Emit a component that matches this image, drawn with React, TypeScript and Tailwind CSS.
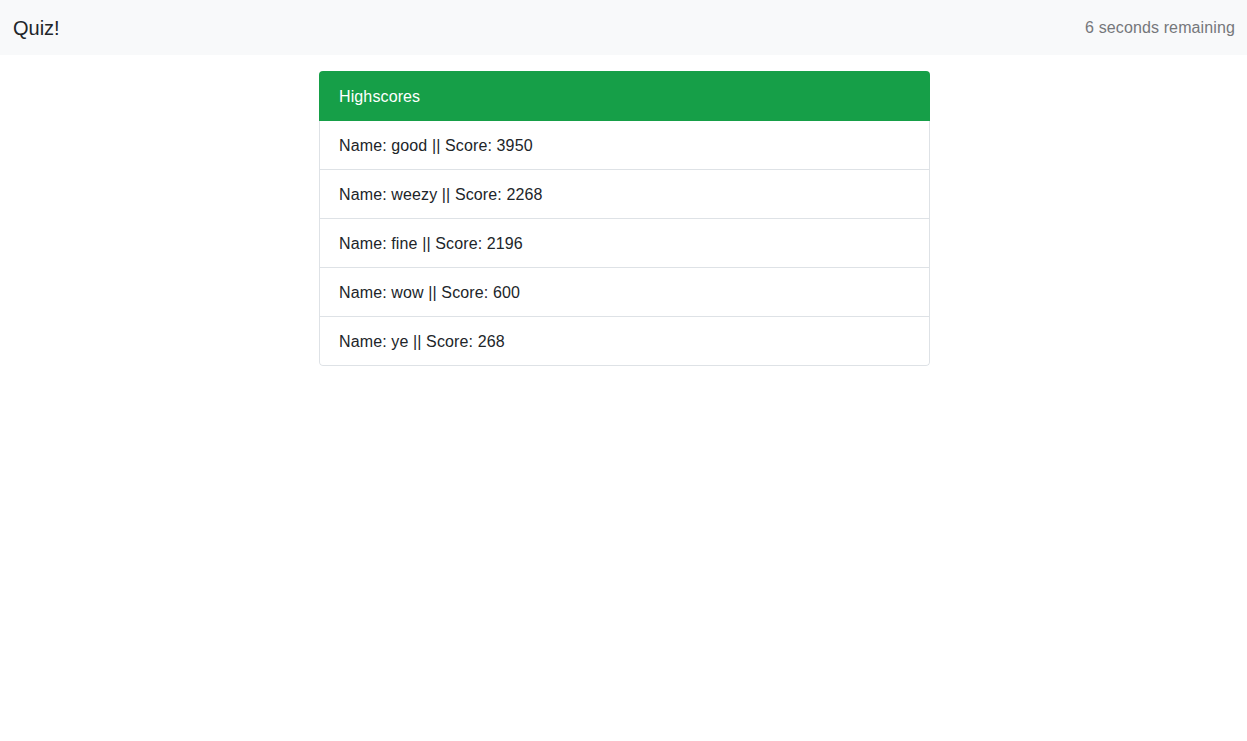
import React from "react";

const scores = [
  { name: "good", score: 3950 },
  { name: "weezy", score: 2268 },
  { name: "fine", score: 2196 },
  { name: "wow", score: 600 },
  { name: "ye", score: 268 },
];

export default function App() {
  return (
    <div className="min-h-screen bg-white text-[#212529] tracking-[0.12px]" style={{ fontFamily: '"Liberation Sans", Arial, sans-serif' }}>
      <nav className="flex h-[55px] items-center justify-between bg-[#f8f9fa] pl-[13px] pr-[12px]">
        <span className="text-[20px] text-[#212529] tracking-normal">Quiz!</span>
        <span className="text-[16px] text-[#75777a]">6 seconds remaining</span>
      </nav>
      <div className="mt-4 flex justify-center pl-[2px]">
        <div className="w-[611px] overflow-hidden rounded-[4px]">
          <div className="flex h-[50px] items-center bg-[#169f48] px-5 pt-[2px] text-[16px] text-white">Highscores</div>
          <div className="rounded-b-[4px] border-x border-b border-[#dee2e6]">
            {scores.map((s, i) => (
              <div
                key={s.name}
                className={
                  i < scores.length - 1
                    ? "flex h-[49px] items-center border-b border-[#dee2e6] px-[19px] pt-[2px] text-[16px]"
                    : "flex h-[48px] items-center px-[19px] pt-[2px] text-[16px]"
                }
              >
                Name: {s.name} || Score: {s.score}
              </div>
            ))}
          </div>
        </div>
      </div>
    </div>
  );
}
